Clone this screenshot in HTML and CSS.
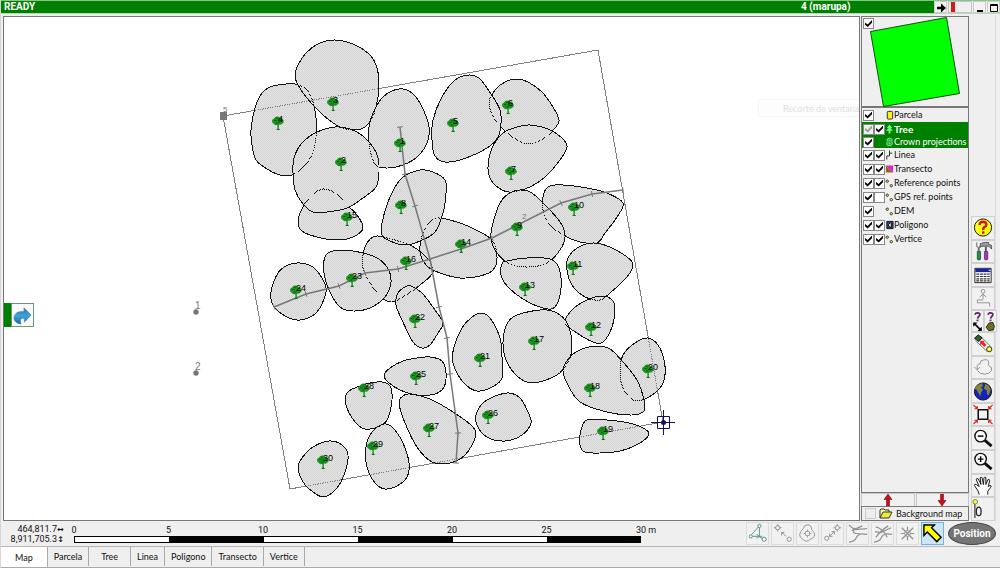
FILE: index.html
```html
<!DOCTYPE html>
<html lang="en">
<head>
<meta charset="utf-8">
<title>4 (marupa)</title>
<link rel="stylesheet" href="styles.css">
</head>
<body>
<div class="app">
  <header class="titlebar">
    <span class="status">READY</span>
    <h1 class="plot-name">4 (marupa)</h1>
    <div class="window-controls">
      <button class="win-btn" aria-label="Next"><svg viewBox="0 0 12 12"><path d="M2 6h5" stroke="#000" stroke-width="2.500"/><path d="M6 1.500L11 6l-5 4.500z"/></svg></button>
      <span class="gauge"><i></i></span>
      <button class="win-btn" aria-label="Minimize"><svg viewBox="0 0 12 12"><path d="M3 8h6v2H3z"/></svg></button>
      <button class="win-btn" aria-label="Maximize"><svg viewBox="0 0 12 12"><path d="M2.500 2.500h7v7h-7zM2.500 3.500h7" fill="none" stroke="#000"/></svg></button>
    </div>
  </header>

  <main class="workspace">
    <section class="map-view" aria-label="Map">
      <svg class="map" id="map" viewBox="4 17 855 503" preserveAspectRatio="xMinYMin meet">
        <defs>
          <pattern id="hatch" width="2" height="2" patternUnits="userSpaceOnUse" shape-rendering="crispEdges">
            <rect width="1" height="1" fill="#d4d4d4"/><rect x="1" y="1" width="1" height="1" fill="#d4d4d4"/>
          </pattern>
          <g id="tree">
            <path d="M-.500 2h1.200v5.500l1.500 1.500h-4l1.300-1.500z" fill="#0b7a14"/>
            <path d="M-6 0q0-2 2-2.500q1-2 3-2q2-.5 3.500 1.500q2.500 0 3 2.500q1 2-1 3q-1 1.500-3 1q-1.500 1.500-3 .5q-2 .5-2.500-1q-2-.5-2-3z" fill="#1a941f"/>
            <path d="M-4-.5h2.500M0 .5h3M-2-2.500h2M2-1.500h2M-2 2h2.500" stroke="#056b0a" fill="none"/>
          </g>
        </defs>
        <g id="crown-base" class="crown-base"></g>
        <path class="plot" d="M223 116L598 50L663 422L290 489Z"/>
        <g id="crowns" class="crowns"></g>
        <g id="transects" class="transects"></g>
        <g id="trees" class="tree-labels"></g>
        <g class="refs">
          <rect x="220" y="112" width="7" height="8"/>
          <text x="223" y="112">5</text>
          <circle cx="196" cy="312" r="2.700"/><text class="ref-label" x="195" y="309">1</text>
          <circle cx="196" cy="373" r="2.700"/><text class="ref-label" x="195" y="370">2</text>
          <text x="522" y="219">2</text>
        </g>
        <g class="target"><path d="M657.500 416.500h12v12h-12zM651 422.500h24M663.500 410v25"/><circle cx="663.500" cy="422.500" r="2.500"/></g>
      </svg>
      <div class="flyout"><button class="flyout-btn" aria-label="Forward"><svg viewBox="0 0 22 22"><defs><linearGradient id="arrow-fill" x2="0" y2="1"><stop stop-color="#2375b4"/><stop offset=".5" stop-color="#3aa6d8"/><stop offset="1" stop-color="#1f5f9f"/></linearGradient></defs><path d="M12.500 3l7.500 7.500-7 7.500v-4c-4-.5-5 1-3.500 6C3 19 1 15 2.500 11.500C4 7.500 8 6.500 12.500 7z" fill="url(#arrow-fill)" stroke="#4d83a8" stroke-width=".7"/></svg></button></div>
      <div class="ghost">Recorte de ventana</div>
    </section>

    <aside class="layers-panel">
      <div class="thumb">
        <input class="check thumb-check" type="checkbox" checked aria-label="Show overview">
        <svg viewBox="0 0 105 90"><path d="M7.500 14.500L83.500.5l13 76-76 13z" fill="#0f0" stroke="#174d17"/></svg>
      </div>
      <ul class="layers" id="layers"></ul>
      <div class="order">
        <button aria-label="Move up"><svg viewBox="0 0 10 12"><path d="M5 0l4 5.500H6.500V12h-3V5.500H1z" fill="#c8101c" stroke="#500" stroke-width=".5"/></svg></button>
        <button aria-label="Move down"><svg viewBox="0 0 10 12"><path d="M5 12l4-5.500H6.500V0h-3v6.500H1z" fill="#c8101c" stroke="#500" stroke-width=".5"/></svg></button>
      </div>
      <label class="background"><input class="check disabled" type="checkbox" disabled>
        <svg viewBox="0 0 14 11"><path d="M1 10V2l1-1h3l1 1h4v2" fill="#ffff99" stroke="#333"/><path d="M1 10l3-6h9l-3 6z" fill="#f4e838" stroke="#333"/></svg>Background map</label>
    </aside>

    <nav class="tools" aria-label="Map tools">
      <button aria-label="Help"><svg viewBox="0 0 22 22"><circle cx="11" cy="11" r="9" fill="#ffff10" stroke="#111"/><path d="M7.500 8.500Q7.500 5 11 5t3.500 3q0 1.500-2 2.500Q11.200 11.500 11.200 13.500" fill="none" stroke="#d81010" stroke-width="2.500"/><path d="M10 15h2.500v2.500H10z" fill="#d81010"/></svg></button>
      <button aria-label="Tools"><svg viewBox="0 0 22 22"><path d="M4.500 1.500v4l1.500 1.500v4M8.500 2v3.500L7 7v4" fill="none" stroke="#777" stroke-width="1.200"/><path d="M5 11h3.500v8q-1.700 2-3.500 0z" fill="#238c46" stroke="#143" stroke-width=".7"/><path d="M8 4q1-2 4-2.500h5v2l3 1v4l-3-3h-6q-2 0-3 1z" fill="#999" stroke="#333" stroke-width=".7"/><path d="M13 6h2v5h-2z" fill="#555"/><path d="M12.500 11h3.500v8q-2 2-3.500 0z" fill="#c027bd" stroke="#424" stroke-width=".7"/></svg></button>
      <button aria-label="Table"><svg viewBox="0 0 22 22"><path d="M2.500 3.500h17v15h-17z" fill="#fff" stroke="#222"/><path d="M3 4h16v3.500H3z" fill="#1625a0"/><path d="M17 5h2v1h-2z" fill="#fff"/><path d="M4 9.500h14M4 12h14M4 14.500h14M4 16.700h14" stroke="#333" stroke-width="1.200" stroke-dasharray="3 .8"/></svg></button>
      <button class="faded" aria-label="Station path"><svg viewBox="0 0 22 22"><circle cx="11" cy="3.500" r="2"/><path d="M11 6v6M7.500 9.500L11 6.500l3.500 3M5 12.500h6M5 12.500v3h13v4" /></svg></button>
      <div class="pair">
        <button aria-label="Query distance"><svg viewBox="0 0 11 22"><path d="M3 4q0-2 2.500-2T8 4q0 1-1.500 2L5.500 8" fill="none" stroke="#602068" stroke-width="1.800"/><path d="M4.500 9h2v1.700h-2z" fill="#602068"/><path d="M2.500 13.500l6 6" stroke="#000" stroke-width="1.700"/><path d="M1 12h4.500L1 16.500zM10 21H5.500L10 16.500z"/></svg></button>
        <button aria-label="Query area"><svg viewBox="0 0 11 22"><path d="M3 4q0-2 2.500-2T8 4q0 1-1.500 2L5.500 8" fill="none" stroke="#602068" stroke-width="1.800"/><path d="M4.500 9h2v1.700h-2z" fill="#602068"/><path d="M4 12.500l4-.5L9.500 16 8.500 20l-5 .5L1 17z" fill="#6f701c" stroke="#222"/></svg></button>
      </div>
      <button aria-label="Aim"><svg viewBox="0 0 22 22"><path d="M8 3l11 11M3 8l12 11" stroke="#555" stroke-width=".8"/><path d="M2 5.500L6 2l4 3-3.500 4z" fill="#27622f" stroke="#111"/><path d="M9.500 9.500l4 4" stroke="#e22" stroke-width="3"/><path d="M8 8h5l-5 5z" fill="#e22"/><circle cx="17.500" cy="17" r="2.700" fill="#ff3" stroke="#222"/></svg></button>
      <button class="faded" aria-label="Polygon path"><svg viewBox="0 0 22 22"><path d="M5 13V9q1-2 3-2 0-4 4-4 5-1 5 3-1 4 3 5 1 4-3 6l-4 1-5-1-3-3M2 10.500l3 3 3-3"/></svg></button>
      <button aria-label="Globe"><svg viewBox="0 0 22 22"><circle cx="11" cy="11" r="9" fill="#1423bd" stroke="#111"/><path d="M4 5l6-3 1 3-2 2 2 2-2 3-1 4-2-4-2-3-2-1zM13 3l4 2 2 4-2 6-2-1v-4l-3-2 1-3z" fill="#85843c"/></svg></button>
      <button aria-label="Fit view"><svg viewBox="0 0 22 22"><path d="M6 6h10v10H6z" fill="none" stroke="#111" stroke-width="1.600"/><path d="M1 1l4 4M21 1l-4 4M1 21l4-4M21 21l-4-4M5 2v3H2M17 2v3h3M5 20v-3H2M17 20v-3h3" fill="none" stroke="#d32222" stroke-width="1.200"/></svg></button>
      <button aria-label="Zoom out"><svg viewBox="0 0 22 22"><circle cx="8.500" cy="8.500" r="6" fill="#fff" stroke="#111" stroke-width="1.500"/><path d="M5.500 8.500h6" stroke="#000" stroke-width="1.500"/><path d="M13 13l7 6" stroke="#111" stroke-width="3"/></svg></button>
      <button aria-label="Zoom in"><svg viewBox="0 0 22 22"><circle cx="8.500" cy="8.500" r="6" fill="#fff" stroke="#111" stroke-width="1.500"/><path d="M5.500 8.500h6M8.500 5.500v6" stroke="#000" stroke-width="1.500"/><path d="M13 13l7 6" stroke="#111" stroke-width="3"/></svg></button>
      <button aria-label="Pan"><svg viewBox="0 0 22 22"><path d="M7 20.500l-1-3.500-4-6q0-2 2-1l3 2L4 5q0-2 2-1l3 6-1-7q1-2 2 0l1.500 7L12 3q1-2 2 0v7l2-5q2-1 2 1l-1.500 6 2-1q2 0 .5 2L16 17v3.500" fill="#fff" stroke="#111"/></svg></button>
      <button aria-label="Height"><svg viewBox="0 0 22 22"><path d="M2.500 4v16" stroke="#555" stroke-width="1.500"/><circle cx="2.800" cy="3" r="2.400" fill="#ff2" stroke="#775"/><ellipse cx="6.500" cy="13" rx="2.500" ry="4.500" fill="none" stroke="#222" stroke-width="1.300"/></svg></button>
    </nav>
  </main>

  <footer class="statusbar">
    <div class="coords"><span>464,811.7<b>↔</b></span><span>8,911,705.3<b>↕</b></span></div>
    <div class="scale">
      <div class="seg"><span>0</span></div><div class="seg"><span>5</span></div><div class="seg"><span>10</span></div>
      <div class="seg"><span>15</span></div><div class="seg"><span>20</span></div><div class="seg"><span>25</span></div>
      <div class="seg-end"><span>30 m</span></div>
    </div>
    <div class="edit-tools">
      <button class="faded teal" aria-label="Triangulate"><svg viewBox="0 0 22 22"><circle cx="13" cy="3" r="1.700"/><circle cx="4" cy="14" r="1.700"/><circle cx="18" cy="17" r="2.200"/><path d="M5 12l7-8M13 5v9h3M6 14h6l4 2M10 12l3 2-3 2"/></svg></button>
      <button class="faded" aria-label="Move point"><svg viewBox="0 0 22 22"><circle cx="6" cy="5" r="2.200"/><circle cx="18" cy="17" r="2.200"/><path d="M6 1v2M6 7v2M2 5h2M8 5h2M10 10l5 4M10 10v3M10 10h3"/></svg></button>
      <button class="faded" aria-label="Polygon"><svg viewBox="0 0 22 22"><path d="M8 3q6-3 7 2 0 3 3 5 2 5-4 7-4 4-8 0-5-3-2-8 3-3 4-6z"/><circle cx="11" cy="11" r="2.500"/><path d="M11 7v2M11 13v2M7 11h2M13 11h2"/></svg></button>
      <button class="faded" aria-label="Connect points"><svg viewBox="0 0 22 22"><circle cx="16" cy="5" r="2.200"/><circle cx="5" cy="16" r="2.200"/><path d="M16 1v2M16 7v2M12 5h2M18 5h2M8 14l5-5M8 11v3h3M13 12V9h-3"/></svg></button>
      <button class="faded" aria-label="Line"><svg viewBox="0 0 22 22"><path d="M2 2l6 5 13-1M5 8l11-5M8 5q-3 5 1 6h4M2 20q6 0 8-5t11-3" stroke-width="1.300"/></svg></button>
      <button class="faded" aria-label="Split line"><svg viewBox="0 0 22 22"><path d="M4 4q8 2 12 11M17 3Q9 8 4 15M3 9l6 1 11-5M2 20q6 0 8-5t11-3" stroke-width="1.300"/></svg></button>
      <button class="faded" aria-label="Delete point"><svg viewBox="0 0 22 22"><path d="M5 5l12 12M17 5L5 17M11 4v4M11 14v4M4 11h4M14 11h4" stroke-width="1.300"/><circle cx="11" cy="11" r="3"/></svg></button>
      <button class="active" aria-label="Select"><svg viewBox="0 0 22 22"><path d="M2 2h11l-3 3 10 10-4.500 4.500-10-10L2 13z" fill="#ffff00" stroke="#000" stroke-width="1.500"/></svg></button>
      <button class="position">Position</button>
    </div>
  </footer>
  <nav class="tabs">
    <button class="tab current">Map</button><button class="tab">Parcela</button><button class="tab wide">Tree</button><button class="tab">Linea</button><button class="tab">Poligono</button><button class="tab">Transecto</button><button class="tab">Vertice</button>
  </nav>
</div>
<script src="app.js"></script>
</body>
</html>
```
FILE: styles.css
```css
* { box-sizing: border-box; }
body { margin: 0; font: 9px/12px Roboto, "Liberation Sans", sans-serif; color: #111; background: #efefef; }
button { font: inherit; color: inherit; margin: 0; padding: 0; border: 0; background: none; }
svg { display: block; }
.app { display: flex; flex-direction: column; height: 100vh; min-height: 480px; border-left: 1px solid #d6d6d6; }

.titlebar { display: flex; align-items: center; flex: none; height: 14px; color: #fff; background: #008000; border-top: 1px solid #8cc48c; border-bottom: 1px solid #b5dcb5; font-size: 10px; font-weight: bold; }
.status { flex: 1; padding-left: 3px; }
.plot-name { margin: 0; font-size: 10px; width: 133px; }
.window-controls { display: flex; gap: 1px; height: 12px; background: #efefef; }
.win-btn { width: 13px; background: #f2f2f2; border: 1px solid #ccc; display: grid; place-items: center; }
.win-btn svg { width: 12px; height: 12px; }
.gauge { width: 24px; border: 1px solid #c4c4c4; padding: 0 2px; }
.gauge i { display: block; width: 4px; height: 10px; background: #d81818; }

.workspace { display: flex; flex: 1; min-height: 0; padding: 2px 4px 0 2px; }
.map-view { position: relative; flex: 1; min-width: 0; background: #fff; border: 1px solid #777; overflow: hidden; }
.map { width: 100%; height: 100%; }
.crown-base path { fill: #e3e3e3; }
.crowns path { fill: url(#hatch); stroke: #111; shape-rendering: crispEdges; }
.plot { fill: none; stroke: #808080; shape-rendering: crispEdges; }
.transects path { fill: none; stroke: #777; stroke-width: 1.5; }
.transects .tick { stroke-width: 1; }
.tree-labels text { font: 9px "Liberation Sans", sans-serif; fill: #000; }
.refs { fill: #777; font: 8px "Liberation Sans", sans-serif; }
.ref-label { font-size: 10px; }
.target path { fill: none; stroke: #10106a; }
.target circle { fill: #10106a; }
.flyout { position: absolute; left: 0; top: 286px; display: flex; padding-left: 7px; background: #008000; }
.flyout-btn { width: 23px; height: 24px; background: #fafafa; border: 1px solid #6a9477; }
.ghost { position: absolute; right: 0; top: 82px; width: 101px; height: 18px; padding: 3px 0 0 24px; font-family: Lato, sans-serif; color: #e0e0e6; background: #fdfdfd; border: 1px solid #f6f6f6; border-right: 0; white-space: nowrap; }

.layers-panel { display: flex; flex-direction: column; flex: none; width: 108px; margin-left: 1px; font-family: Lato, sans-serif; }
.thumb { position: relative; flex: none; height: 91px; border: 1px solid #777; }
.thumb-check { position: absolute; left: 1px; top: 1px; }
.thumb svg { width: 105px; height: 90px; margin-left: 1px; }
.layers { list-style: none; margin: 0; padding: 0; flex: 1; min-height: 0; border: 1px solid #777; overflow: hidden; }
.layer { display: grid; grid-template-columns: 11px 11px 9px 1fr; align-items: center; height: 14px; padding-left: 1px; white-space: nowrap; }
.layer svg { width: 9px; height: 10px; }
.layer.selected { background: #008000; color: #fff; }
.layer.compact { height: 12px; }
.layer.strong { font-weight: bold; font-size: 10px; }
.check { appearance: none; width: 11px; height: 11px; margin: 0; background: #fff; border: 1px solid #888; display: grid; place-items: center; flex: none; }
.check:checked::before { content: ""; width: 7px; height: 7px; background: #000; clip-path: polygon(0 35%, 38% 65%, 100% 0, 100% 38%, 38% 100%, 0 68%); }
.check.dim { background: #eee; }
.check.dim:checked::before { background: #999; }
.check.disabled { background: #eee; border-color: #ccc; }
.order { display: grid; grid-template-columns: 1fr 1fr; gap: 1px; height: 13px; flex: none; }
.order button { display: grid; place-items: center; border: 1px solid #c6c6c6; background: #f1f1f1; }
.order svg { width: 10px; height: 12px; }
.background { display: flex; align-items: center; gap: 3px; height: 15px; flex: none; padding-left: 3px; border: 1px solid #777; white-space: nowrap; }
.background svg { width: 14px; height: 11px; }

.tools { display: flex; flex-direction: column; flex: none; width: 25px; margin-left: 2px; padding-top: 200px; border-right: 1px solid #ddd; }
.tools button { flex: 1; min-height: 0; display: grid; place-items: center; border: 1px solid #d0d0d0; background: #f1f1f1; }
.tools svg { width: 22px; height: 21px; }
.tools .pair { display: flex; flex: 1; min-height: 0; }
.tools .pair svg { width: 11px; }
.faded svg { fill: none; stroke: #929292; }
.faded.teal svg { stroke: #5e938b; }

.statusbar { display: flex; flex: none; height: 26px; padding: 1px 4px 0 3px; border-bottom: 1px solid #b6b6b6; }
.coords { display: flex; flex-direction: column; width: 60px; padding-top: 2px; line-height: 10px; text-align: right; }
.coords b { display: inline-block; width: 7px; font: bold 8px/8px "DejaVu Sans", sans-serif; text-align: center; }
.scale { display: flex; flex: 0 1 567px; min-width: 0; margin-left: 10px; padding-top: 2px; }
.seg { flex: 1; }
.seg span { display: block; width: 16px; margin-left: -8px; text-align: center; }
.seg::after { content: ""; display: block; height: 5px; border: 1px solid #000; border-right: 0; background: #fff; }
.seg:nth-child(even)::after { background: #000; }
.seg-end { width: 0; white-space: nowrap; }
.seg-end span { display: block; margin-left: -5px; }
.edit-tools { display: flex; gap: 2px; margin-left: auto; }
.edit-tools button { width: 23px; height: 23px; display: grid; place-items: center; border: 1px solid #dcdcdc; background: #f1f1f1; }
.edit-tools svg { width: 21px; height: 21px; }
.edit-tools .active { background: #cde6f7; border-color: #7ab0d8; }
.edit-tools .position { width: 48px; margin-left: 2px; border: 1px solid #444; border-radius: 50%; background: #757575; color: #fff; font-size: 10px; font-weight: bold; }

.tabs { display: flex; flex: none; height: 21px; border-bottom: 1px solid #aaa; font-family: Lato, sans-serif; }
.tab { height: 19px; padding: 0 6px; border-right: 1px solid #aaa; }
.tab.wide { padding: 0 12px; }
.tab.current { height: 20px; padding: 2px 14px 0; background: #fff; }
```
FILE: app.js
```js
const NS = 'http://www.w3.org/2000/svg';

// Crowns in drawing order: later crowns lie over earlier ones.
const crowns = [
  '295,84 307,90 313,102 316,118 316,137 312,155 303,167 292,175 280,175 267,169 256,160 252,145 251,130 255,108 262,93 273,86',
  '335,40 353,44 370,55 377,68 379,87 376,107 372,118 365,127 355,130 340,127 323,115 307,98 298,85 295,76 297,67 307,52 320,43',
  '399,89 412,93 422,107 429,127 427,143 417,157 403,165 388,168 377,166 372,158 369,143 369,127 373,113 383,97',
  '323,189 335,193 347,205 357,215 363,228 353,237 337,240 317,237 302,231 298,220 303,207 312,195',
  '335,127 350,129 363,136 373,147 378,158 379,172 376,187 363,198 347,208 327,212 313,212 303,204 295,190 293,173 294,158 302,143 317,132',
  '517,79 528,82 542,92 553,107 559,120 555,128 543,139 528,144 517,140 505,131 495,120 489,103 495,90 505,82',
  '469,75 480,79 493,97 500,110 501,123 498,137 487,148 463,159 445,162 435,156 432,140 433,120 442,97 455,80',
  '530,125 548,129 562,138 567,147 560,160 545,177 530,187 513,192 502,190 491,180 488,167 492,148 503,133 517,127',
  '377,236 387,238 410,245 427,258 433,272 420,285 403,297 392,302 382,298 370,283 363,268 364,250 370,239',
  '437,218 450,220 470,227 492,240 497,257 493,270 480,276 460,278 440,273 427,266 420,252 423,233 430,222',
  '420,170 433,172 445,180 446,193 443,213 435,232 420,241 405,245 390,241 382,235 382,223 390,197 402,178',
  '550,186 563,185 587,188 607,193 623,203 617,217 605,233 597,243 580,242 565,236 550,225 543,210 544,193',
  '520,190 532,193 550,210 562,225 565,237 560,250 547,263 528,267 510,264 497,253 491,238 493,223 500,203 508,194',
  '593,243 610,247 627,257 633,265 627,277 610,293 600,300 585,297 572,285 567,270 568,258 577,248',
  '507,261 527,258 550,259 559,268 561,288 555,307 543,308 523,299 507,286 501,275 502,264',
  '603,296 612,300 615,308 612,327 603,342 593,342 577,333 565,323 572,310 587,300',
  '333,251 353,251 375,257 387,267 391,282 385,297 370,308 353,311 340,307 330,292 324,273 325,257',
  '300,263 313,267 323,280 326,292 317,312 300,320 285,316 273,305 271,292 278,273 288,265',
  '411,286 422,293 435,310 443,323 438,333 430,345 422,348 413,342 402,320 396,305 398,293 405,287',
  '540,310 557,313 568,325 572,347 568,362 557,375 533,383 517,376 505,357 504,333 513,317',
  '481,313 490,318 500,338 502,357 502,378 492,387 477,391 463,382 453,363 454,347 462,328 472,317',
  '648,338 658,345 664,360 665,375 660,388 645,399 633,400 623,388 620,373 623,355 635,343',
  '597,346 610,349 623,362 637,380 644,400 644,411 632,415 607,412 580,402 567,383 563,370 570,357 582,349',
  '587,420 607,420 633,424 649,433 640,443 620,451 600,453 585,452 580,445 581,430',
  '507,393 520,398 528,412 531,423 522,435 505,441 487,437 477,425 477,412 487,400',
  '430,357 442,361 446,373 444,387 435,394 417,395 400,390 388,382 384,375 390,368 403,361 417,358',
  '410,394 430,399 453,412 473,427 475,438 465,455 450,463 432,462 417,447 405,423 399,403 403,396',
  '382,382 390,386 392,400 387,420 378,427 365,429 355,422 346,405 347,393 357,387 370,383',
  '384,424 393,428 403,443 409,463 407,477 397,486 385,489 375,483 367,467 366,447 372,432',
  '329,441 342,445 348,455 345,472 337,488 323,497 308,488 302,480 298,468 302,458 313,447'
];

const trees = [
  [1, 400, 143], [2, 341, 162], [3, 333, 102], [4, 278, 121], [5, 453, 123], [6, 508, 105],
  [7, 511, 171], [8, 401, 205], [9, 517, 227], [10, 574, 207], [11, 573, 266], [12, 591, 327],
  [13, 525, 287], [14, 461, 244], [15, 347, 217], [16, 406, 261], [17, 534, 341], [18, 590, 388],
  [19, 603, 431], [20, 648, 369], [21, 480, 358], [22, 415, 319], [23, 352, 278], [24, 296, 290],
  [25, 416, 376], [26, 488, 415], [27, 429, 428], [28, 364, 388], [29, 373, 446], [30, 323, 460]
];

const transects = [
  [[400, 127], [405, 174], [415, 206], [430, 259], [439, 307], [447, 338], [450, 374], [458, 433], [456, 463]],
  [[274, 307], [306, 294], [339, 286], [365, 273], [398, 269], [430, 259], [461, 249], [492, 238], [561, 203], [592, 194], [623, 190]]
];

function add(parent, tag, attrs, text) {
  const el = document.createElementNS(NS, tag);
  for (const key in attrs) el.setAttribute(key, attrs[key]);
  if (text !== undefined) el.textContent = text;
  parent.appendChild(el);
}

// Closed Catmull-Rom curve through all points.
function smooth(list) {
  const p = list.split(' ').map(s => s.split(',').map(Number));
  const n = p.length;
  let d = `M${p[0]}`;
  for (let i = 0; i < n; i++) {
    const [a, b, c, e] = [p[(i + n - 1) % n], p[i], p[(i + 1) % n], p[(i + 2) % n]];
    d += `C${b[0] + (c[0] - a[0]) / 6} ${b[1] + (c[1] - a[1]) / 6} ${c[0] - (e[0] - b[0]) / 6} ${c[1] - (e[1] - b[1]) / 6} ${c[0]} ${c[1]}`;
  }
  return d + 'Z';
}

const byId = id => document.getElementById(id);
for (const c of crowns) {
  const d = smooth(c);
  add(byId('crown-base'), 'path', { d });
  add(byId('crowns'), 'path', { d });
}
for (const line of transects) {
  add(byId('transects'), 'path', { d: 'M' + line.join('L') });
  line.forEach((pt, i) => {
    const a = line[Math.max(0, i - 1)], b = line[Math.min(line.length - 1, i + 1)];
    const len = Math.hypot(b[0] - a[0], b[1] - a[1]);
    const x = (b[1] - a[1]) / len * 3, y = -(b[0] - a[0]) / len * 3;
    add(byId('transects'), 'path', { class: 'tick', d: `M${pt[0] - x} ${pt[1] - y}L${pt[0] + x} ${pt[1] + y}` });
  });
}
for (const [id, x, y] of trees) {
  add(byId('trees'), 'use', { href: '#tree', x, y });
  add(byId('trees'), 'text', { x, y: y + 1 }, id);
}

const dots = '<circle cx="2.500" cy="3" r="1.300" fill="#ff6" stroke="#222"/><circle cx="7" cy="8" r="1.300" fill="#ff6" stroke="#222"/>';
const icons = {
  plot: '<rect x="2.500" y="1" width="6" height="8.500" rx="1" fill="#ffee20" stroke="#222"/>',
  tree: '<path d="M5 0l3 4H6l3 3H6v3H4V7H1l3-3H2z" fill="#6bff7c"/>',
  crown: '<path d="M2 2q3-3 6 0-1 2 0 3 1 4-3 4-4 0-3-3 2-1 0-4zM4 3l2 1M4 6l2 1" fill="#25a83a" stroke="#79f58b"/>',
  line: '<path d="M5 0v6H2v4M5 3h3" fill="none" stroke="#222"/>',
  transect: '<path d="M1 1h8v8z" fill="#e81bd8"/><path d="M1 1v8h8z" fill="#8f6a2a"/>',
  dots,
  polygon: '<path d="M2 1h7v8H2z" fill="#1d3fa5" stroke="#111"/><path d="M7 2v6L4 6V4z" fill="#eee86a" stroke="#111"/>'
};
// name, icon, first box, second box (null = none), row classes
const layers = [
  ['Parcela', 'plot', true, null, ''], ['Tree', 'tree', 'dim', true, 'selected strong'],
  ['Crown projections', 'crown', true, null, 'selected compact'], ['Linea', 'line', true, true, ''],
  ['Transecto', 'transect', true, true, ''], ['Reference points', 'dots', true, true, ''],
  ['GPS ref. points', 'dots', true, false, ''], ['DEM', 'dots', true, null, ''],
  ['Poligono', 'polygon', true, true, ''], ['Vertice', 'dots', true, true, '']
];
byId('layers').innerHTML = layers.map(([name, icon, show, mark, cls], i) => `
  <li class="layer ${cls}">
    <input class="check ${show === 'dim' ? 'dim' : ''}" type="checkbox" id="layer-${i}" checked>
    ${mark === null ? '<span></span>' : `<input class="check" type="checkbox" aria-label="${name} labels" ${mark ? 'checked' : ''}>`}
    <svg viewBox="0 0 10 10">${icons[icon]}</svg>
    <label for="layer-${i}">${name}</label>
  </li>`).join('');
```
